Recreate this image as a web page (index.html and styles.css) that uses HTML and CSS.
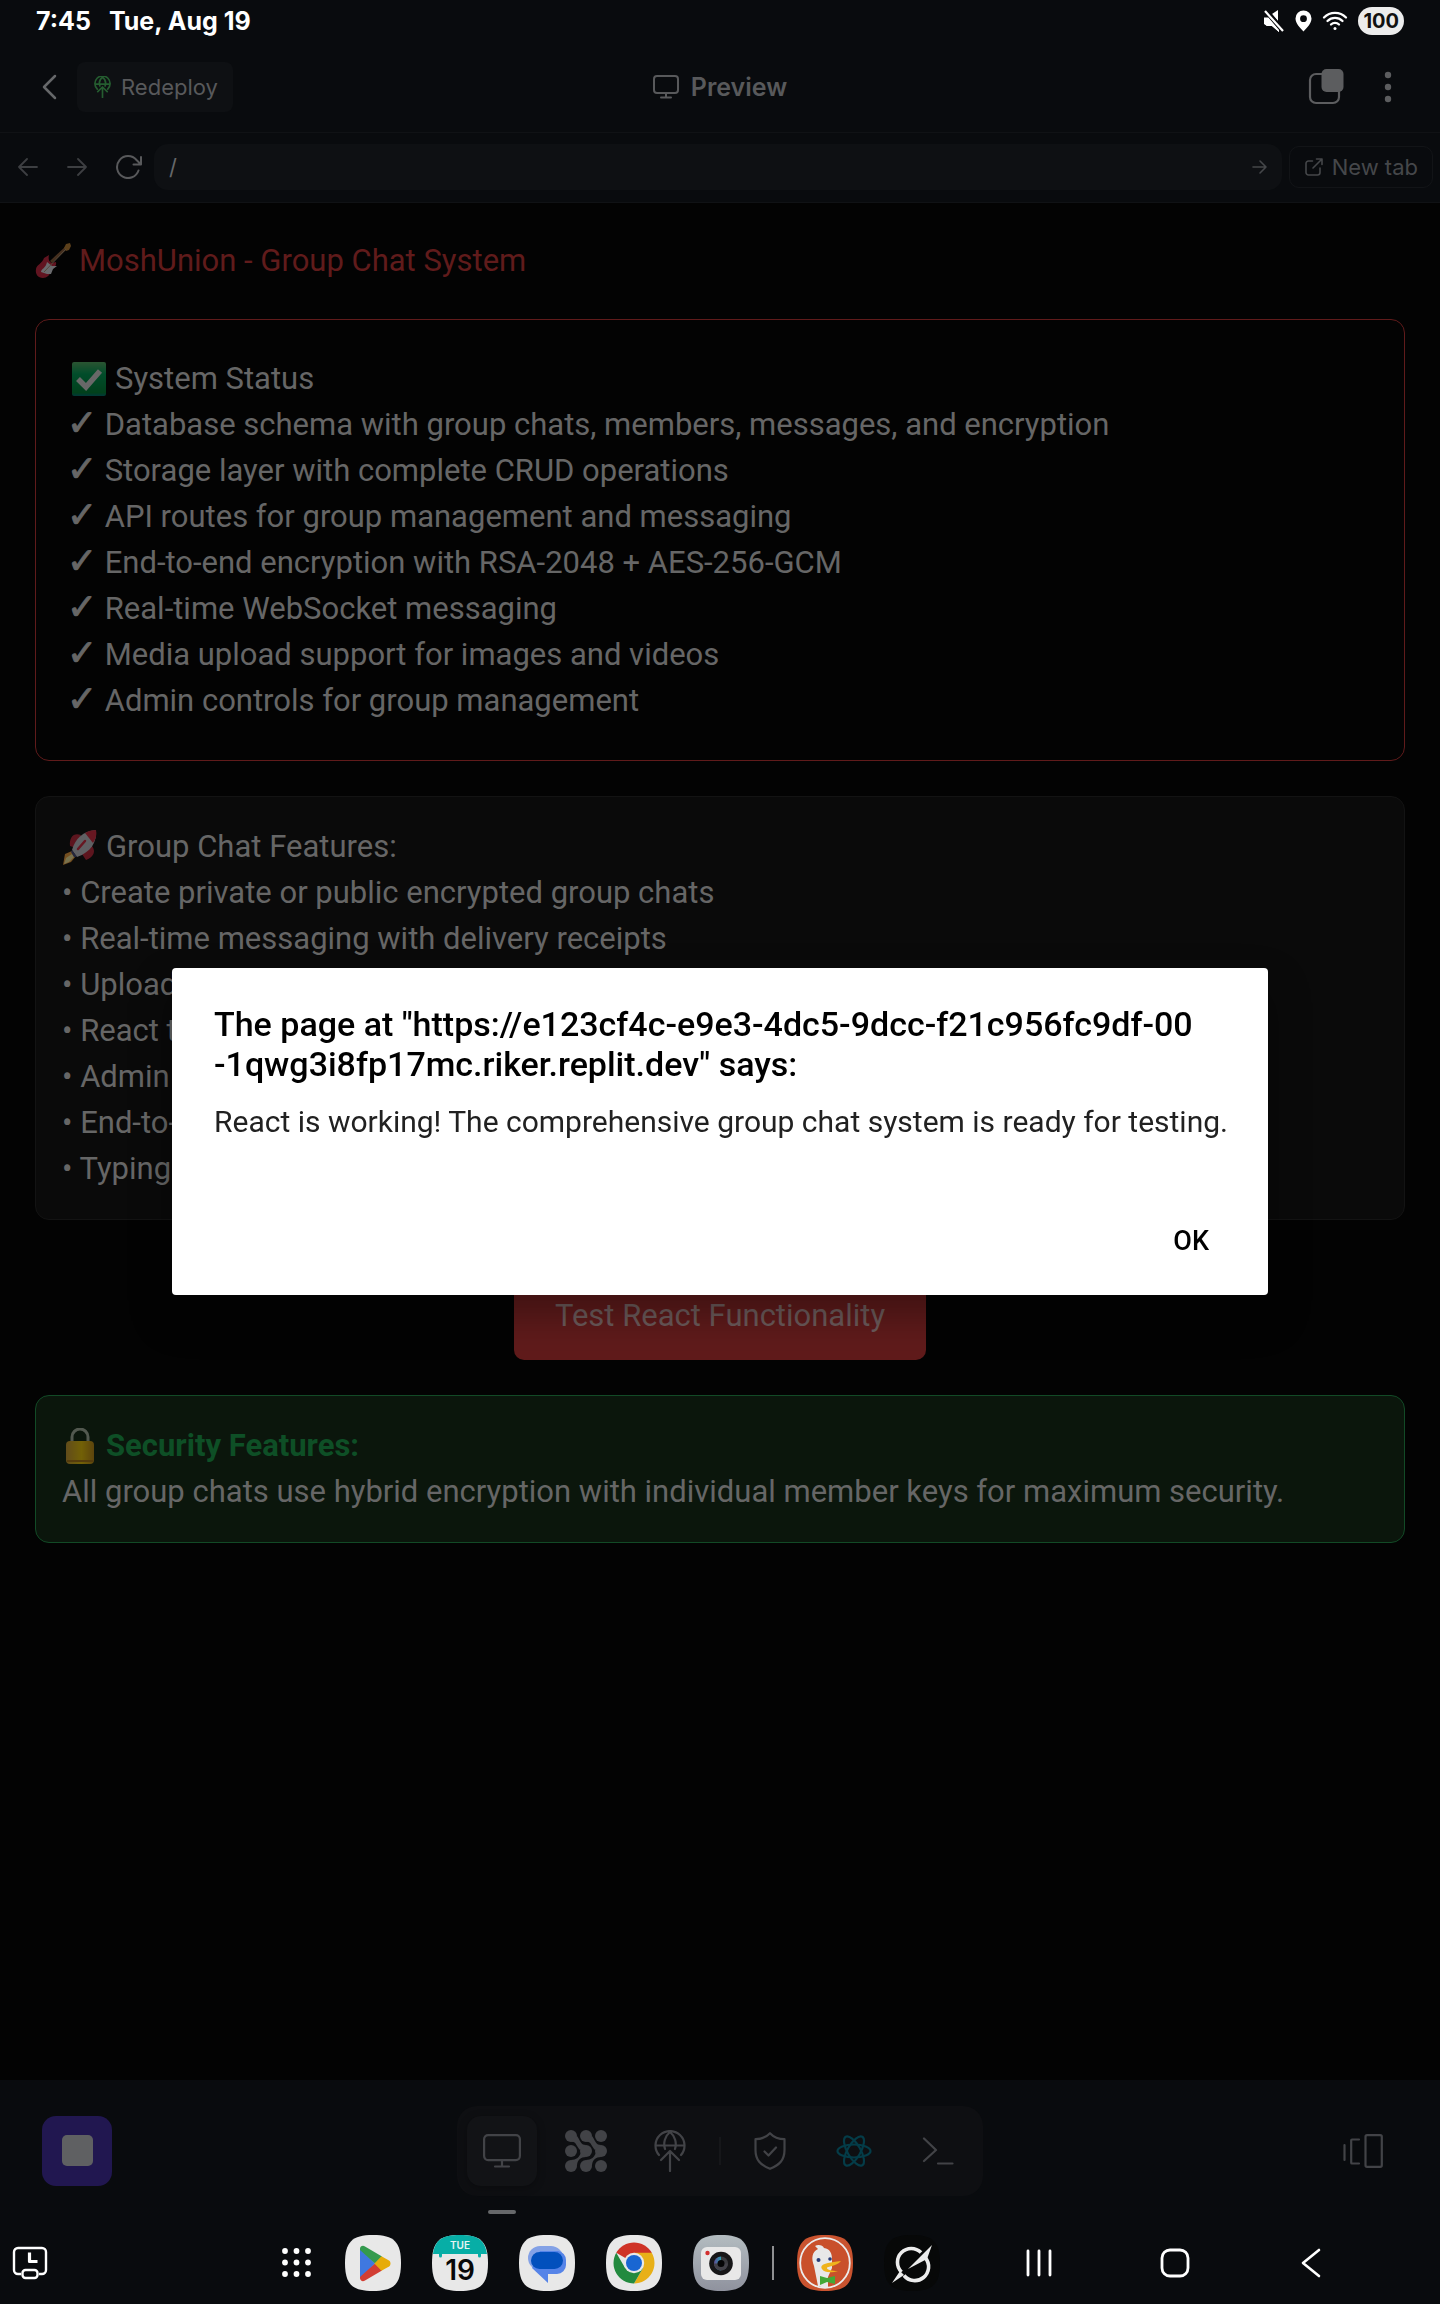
FILE: index.html
```html
<!DOCTYPE html>
<html lang="en">
<head>
<meta charset="utf-8">
<meta name="viewport" content="width=device-width, initial-scale=1">
<title>Preview</title>
<link rel="stylesheet" href="styles.css">
</head>
<body>
<div class="screen">
  <div class="status-bar">
    <span>7:45</span>
    <span>Tue, Aug 19</span>
    <div class="status-icons">
      <svg width="22" height="24" viewBox="0 0 22 24"><path d="M1 9h4l2-2 9 11v5l-7-6H4l-3-3zM9 5l6-4v11z" fill="#fff"/><path d="M3 2l17 20" stroke="#0a0b0e" stroke-width="5"/><path d="M1 8.500h4l11 13v1.500l-7-6H4l-3-2z" fill="#fff"/><path d="M2 2l18 20" stroke="#fff" stroke-width="2.200"/></svg>
      <svg width="17" height="22" viewBox="0 0 17 22"><path fill="#fff" fill-rule="evenodd" d="M8.500 .5a8 8 0 0 1 8 8c0 5-4.500 9-8 13-3.500-4-8-8-8-13a8 8 0 0 1 8-8zm0 4.800a3.400 3.400 0 1 0 0 6.800 3.400 3.400 0 0 0 0-6.800z"/></svg>
      <svg class="wifi" width="26" height="20" viewBox="0 0 26 20" fill="none" stroke="#fff" stroke-width="2.300" stroke-linecap="round"><path d="M2 6.500a15.500 15.500 0 0 1 22 0M5.500 10a10.500 10.500 0 0 1 15 0M9 13.500a5.700 5.700 0 0 1 8 0"/><circle cx="13" cy="17.500" r="1.500" fill="#fff" stroke="none"/></svg>
      <span class="battery">100</span>
    </div>
  </div>

  <header class="top-bar">
    <div class="top-left">
      <button class="icon-btn back" aria-label="Back"><svg width="16" height="26" viewBox="0 0 16 26" fill="none" stroke="#66686a" stroke-width="2.500" stroke-linecap="round" stroke-linejoin="round"><path d="M14 2L3 13l11 11"/></svg></button>
      <button class="redeploy">
        <svg width="17" height="22" viewBox="0 0 32 42" fill="none" stroke="#255d30" stroke-width="3.200" stroke-linecap="round" stroke-linejoin="round"><path d="M6 25a14.500 14.500 0 1 1 20 0M2 15.500h28M11 19c-2-6 0-13 5-17 5 4 7 11 5 17M16 41V21M7 30l9-9 9 9"/></svg>
        Redeploy
      </button>
    </div>
    <h1 class="top-title">
      <svg width="26" height="24" viewBox="0 0 26 24" fill="none" stroke="#58595b" stroke-width="2" stroke-linecap="round" stroke-linejoin="round"><rect x="1" y="1" width="24" height="17" rx="3"/><path d="M13 18v4M8 22.500h10"/></svg>
      Preview
    </h1>
    <div class="top-right">
      <button class="icon-btn" aria-label="Tabs"><svg width="36" height="36" viewBox="0 0 36 36"><rect x="2" y="5" width="29" height="29" rx="6" fill="none" stroke="#5c5d5f" stroke-width="2.200"/><rect x="13.500" y="0" width="22" height="23" rx="5" fill="#5c5d5f"/></svg></button>
      <button class="icon-btn" aria-label="More"><svg width="8" height="32" viewBox="0 0 8 32" fill="#5c5d5f"><circle cx="4" cy="4" r="3.200"/><circle cx="4" cy="16" r="3.200"/><circle cx="4" cy="28" r="3.200"/></svg></button>
    </div>
  </header>

  <nav class="url-row" aria-label="Address">
    <div class="url-nav">
      <button class="icon-btn" aria-label="Go back"><svg width="20" height="20" viewBox="0 0 20 20" fill="none" stroke="#3d3f42" stroke-width="1.800" stroke-linecap="round" stroke-linejoin="round"><path d="M19 10H1M9 2l-8 8 8 8"/></svg></button>
      <button class="icon-btn" aria-label="Go forward"><svg width="20" height="20" viewBox="0 0 20 20" fill="none" stroke="#3d3f42" stroke-width="1.800" stroke-linecap="round" stroke-linejoin="round"><path d="M1 10h18M11 2l8 8-8 8"/></svg></button>
      <button class="icon-btn" aria-label="Reload"><svg width="26" height="24" viewBox="0 0 26 24" fill="none" stroke="#58595b" stroke-width="2" stroke-linecap="round" stroke-linejoin="round"><path d="M22.500 15.500a11 11 0 1 1-2-10.500l4 4M25 2v7.500h-7.500"/></svg></button>
    </div>
    <div class="url-field">
      <input type="text" value="/" aria-label="Path">
      <svg width="16" height="16" viewBox="0 0 16 16" fill="none" stroke="#45474a" stroke-width="1.600" stroke-linecap="round" stroke-linejoin="round"><path d="M1 8h13M8 2l6 6-6 6"/></svg>
    </div>
    <button class="new-tab">
      <svg width="18" height="18" viewBox="0 0 18 18" fill="none" stroke="#45474a" stroke-width="1.600" stroke-linecap="round" stroke-linejoin="round"><path d="M7.500 3H3.500A2.500 2.500 0 0 0 1 5.500v9A2.500 2.500 0 0 0 3.500 17h9a2.500 2.500 0 0 0 2.500-2.500V10M11.500 1H17v5.500M17 1L8 10"/></svg>
      New tab
    </button>
  </nav>

  <main class="page">
    <h2 class="page-title">
      <svg class="emoji" viewBox="0 0 36 36"><path d="M16 19L31 5" stroke="#96653f" stroke-width="3"/><path d="M29 5l2-4 4-1 1 3-2 4-3 1z" fill="#c98a3a"/><path d="M9 15l5-3c-1 4 0 7 3 8l4-1c1 4-3 6-5 9-1 4-4 7-8 7-5 0-8-4-7-9 1-5 6-5 8-11z" fill="#d42a44"/><path d="M12 19l5 4 5 0-4 3-2 5-4 0-6-2c0-3 5-4 6-10z" fill="#e8e8ee"/><path d="M9 29L31 6" stroke="#b9a184" stroke-width="1"/></svg>
      MoshUnion - Group Chat System
    </h2>

    <section class="card status-card">
      <h3 class="line"><svg class="emoji check" viewBox="0 0 36 36"><defs><linearGradient id="ck" x2="0" y2="1"><stop stop-color="#5cb86c"/><stop offset=".35" stop-color="#00a75c"/><stop offset=".9" stop-color="#008a3a"/><stop offset="1" stop-color="#007a7a"/></linearGradient></defs><rect x="1" y="1" width="34" height="34" rx="2" fill="url(#ck)"/><path d="M7 18l8 8L29 10" fill="none" stroke="#e4e4e4" stroke-width="5.500"/></svg> System Status</h3>
      <ul class="lines">
        <li><span class="tick">✓</span> Database schema with group chats, members, messages, and encryption</li>
        <li><span class="tick">✓</span> Storage layer with complete CRUD operations</li>
        <li><span class="tick">✓</span> API routes for group management and messaging</li>
        <li><span class="tick">✓</span> End-to-end encryption with RSA-2048 + AES-256-GCM</li>
        <li><span class="tick">✓</span> Real-time WebSocket messaging</li>
        <li><span class="tick">✓</span> Media upload support for images and videos</li>
        <li><span class="tick">✓</span> Admin controls for group management</li>
      </ul>
    </section>

    <section class="card features-card">
      <h3 class="line"><svg class="emoji" viewBox="0 0 36 36"><path d="M3 25l7-3 4 5-5 6-8 3z" fill="#f6a13a"/><path d="M4 29l6-4 2 3-5 5-5 2z" fill="#fff0a0"/><path d="M19 6C12 3 7 8 8 17l6 2zM30 17c4 5 2 11-6 14l-4-6z" fill="#c22438"/><path d="M10 21C13 10 21 2 34 1c1 12-5 22-19 27z" fill="#c8c8d0"/><path d="M23 4c3-2 7-3 11-3 1 4 0 9-3 13z" fill="#d8283e"/><path d="M16 20L23 12" stroke="#d8283e" stroke-width="2.500" stroke-linecap="round"/><path d="M10 21l5 7-3 0-3-5z" fill="#444a7c"/></svg> Group Chat Features:</h3>
      <ul class="lines">
        <li>• Create private or public encrypted group chats</li>
        <li>• Real-time messaging with delivery receipts</li>
        <li>• Upload</li>
        <li>• React t</li>
        <li>• Admin</li>
        <li>• End-to-</li>
        <li>• Typing</li>
      </ul>
    </section>

    <button class="test-btn">Test React Functionality</button>

    <section class="card security-card">
      <h3 class="line"><svg class="emoji" viewBox="0 0 36 36"><defs><linearGradient id="lk"><stop stop-color="#c98d2e"/><stop offset=".55" stop-color="#f0bc00"/><stop offset="1" stop-color="#c07d10"/></linearGradient></defs><path d="M10 14V9a8 8 0 0 1 16 0v5" fill="none" stroke="#a8a8a0" stroke-width="3"/><rect x="4" y="13" width="28" height="23" rx="4" fill="url(#lk)"/><path d="M5 33h26" stroke="#b06a10" stroke-width="2"/></svg> Security Features:</h3>
      <p class="line">All group chats use hybrid encryption with individual member keys for maximum security.</p>
    </section>
  </main>

  <div class="tool-bar">
    <button class="stop-btn" aria-label="Stop"><span></span></button>
    <div class="tools">
      <button class="tool active" aria-label="Preview"><svg width="38" height="34" viewBox="0 0 38 34" fill="none" stroke="#424347" stroke-width="2.200" stroke-linecap="round" stroke-linejoin="round"><rect x="1.100" y="1.100" width="35.800" height="25" rx="4"/><path d="M19 26v6M12 32.500h14"/></svg></button>
      <button class="tool" aria-label="Agent"><svg width="42" height="42" viewBox="0 0 42 42" fill="#424347"><circle cx="6" cy="6" r="6"/><circle cx="21" cy="6" r="6"/><circle cx="36" cy="6" r="6"/><circle cx="6" cy="21" r="6"/><circle cx="21" cy="21" r="6"/><circle cx="36" cy="21" r="6"/><circle cx="6" cy="36" r="6"/><circle cx="21" cy="36" r="6"/><circle cx="36" cy="36" r="6"/><path d="M6 12c5-1 5 4 9 8l6-5c-5 0-5-3-9-9zM21 12c5-1 5 4 9 8l6-5c-5 0-5-3-9-9zM12 36c0-6 4-9 9-9l-5-5c-1 5-5 8-10 8zM27 36c0-6 4-9 9-9l-5-5c-1 5-5 8-10 8z"/></svg></button>
      <button class="tool" aria-label="Deploy"><svg width="32" height="42" viewBox="0 0 32 42" fill="none" stroke="#424347" stroke-width="2.200" stroke-linecap="round" stroke-linejoin="round"><path d="M5 25a14.500 14.500 0 1 1 22 0M2 15.500h28M11 19c-2-6 0-13 5-17 5 4 7 11 5 17M16 41V21M7 30l9-9 9 9"/></svg></button>
      <span class="tool-divider"></span>
      <button class="tool" aria-label="Security"><svg width="32" height="38" viewBox="0 0 32 38" fill="none" stroke="#424347" stroke-width="2.200" stroke-linecap="round" stroke-linejoin="round"><path d="M16 1.200c4 4.300 8 6 14.500 6V18c0 10-5 15-14.500 18.800C6.500 33 1.500 28 1.500 18V7.200c6.500 0 10.500-1.700 14.500-6zM10.500 19.500l4 4 7.500-8"/></svg></button>
      <button class="tool" aria-label="React"><svg width="36" height="34" viewBox="0 0 36 34" fill="none" stroke="#043c48" stroke-width="2.200"><ellipse cx="18" cy="17" rx="16.500" ry="6.500"/><ellipse cx="18" cy="17" rx="16.500" ry="6.500" transform="rotate(60 18 17)"/><ellipse cx="18" cy="17" rx="16.500" ry="6.500" transform="rotate(120 18 17)"/></svg></button>
      <button class="tool" aria-label="Shell"><svg width="32" height="28" viewBox="0 0 32 28" fill="none" stroke="#424347" stroke-width="2.200" stroke-linecap="round" stroke-linejoin="round"><path d="M2 1.500l12 11.500L2 24M16 26.500h14.500"/></svg></button>
    </div>
    <button class="icon-btn panes" aria-label="Panes"><svg width="40" height="34" viewBox="0 0 40 34" fill="none" stroke="#424347" stroke-width="2.200" stroke-linecap="round" stroke-linejoin="round"><rect x="22.500" y="1.200" width="16.300" height="31.600" rx="1.500"/><path d="M16 5.500H9a.8.8 0 0 0-.8.8v22.400a.8.8 0 0 0 .8.8h7M1.500 11v15"/></svg></button>
    <span class="tool-marker"></span>
  </div>

  <footer class="dock">
    <svg class="dock-clock" width="36" height="34" viewBox="0 0 36 34" fill="none" stroke="#fff" stroke-width="2.400" stroke-linejoin="round"><path d="M9 28H6a4 4 0 0 1-4-4V6a4 4 0 0 1 4-4h24a4 4 0 0 1 4 4v18a4 4 0 0 1-4 4h-3"/><rect x="10.500" y="24" width="15" height="8" rx="3"/><path d="M17.500 6.500v9h8" stroke-width="3.200"/></svg>
    <div class="apps">
      <button class="app-grid" aria-label="All apps"><svg width="30" height="30" viewBox="0 0 30 30" fill="#fff"><circle cx="3" cy="3" r="2.900"/><circle cx="14.500" cy="3" r="2.900"/><circle cx="26" cy="3" r="2.900"/><circle cx="3" cy="14.500" r="2.900"/><circle cx="14.500" cy="14.500" r="2.900"/><circle cx="26" cy="14.500" r="2.900"/><circle cx="3" cy="26" r="2.900"/><circle cx="14.500" cy="26" r="2.900"/><circle cx="26" cy="26" r="2.900"/></svg></button>
      <button class="app" aria-label="Play Store"><svg width="56" height="56" viewBox="0 0 56 56"><path d="M28 0C49 0 56 7 56 28S49 56 28 56 0 49 0 28 7 0 28 0z" fill="#e8e8e8"/><path d="M15 13v31l15-15.500z" fill="#3f78e0"/><path d="M15 14c0-3 3-4 5-2.500l17 10-7 7L15 15z" fill="#349a4e"/><path d="M15 43c0 3 3 4 5 2.500l17-10-7-7L15 42z" fill="#d23e34"/><path d="M36.500 21.200l7.500 4.300c2 1.300 2 4.700 0 6l-7.500 4.300-7-7.300z" fill="#e6ac08"/></svg></button>
      <button class="app calendar" aria-label="Calendar"><svg width="56" height="56" viewBox="0 0 56 56"><path d="M28 0C49 0 56 7 56 28S49 56 28 56 0 49 0 28 7 0 28 0z" fill="#e8e8e8"/><path d="M1 19C3 5 10 0 28 0s25 5 27 19h-6v2a1.500 1.500 0 0 1-3 0v-2H10v2a1.500 1.500 0 0 1-3 0v-2z" fill="#07aea6"/></svg><span class="cal-day">TUE</span><span class="cal-date">19</span></button>
      <button class="app" aria-label="Messages"><svg width="56" height="56" viewBox="0 0 56 56"><path d="M28 0C49 0 56 7 56 28S49 56 28 56 0 49 0 28 7 0 28 0z" fill="#e8e8e8"/><rect x="9" y="11" width="35" height="24" rx="12" fill="#83a1e6"/><path d="M21 16h18a9 9 0 0 1 8 9v5a9 9 0 0 1-9 9h-9v9L13 33z" fill="#5684e8"/><rect x="12" y="17" width="32" height="17" rx="8.500" fill="#0250bd"/></svg></button>
      <button class="app" aria-label="Chrome"><svg width="56" height="56" viewBox="0 0 56 56"><path d="M28 0C49 0 56 7 56 28S49 56 28 56 0 49 0 28 7 0 28 0z" fill="#e8e8e8"/><path d="M28 28L10.250 17.750A20.500 20.500 0 0 1 45.750 17.750z" fill="#cf3327"/><path d="M28 17.750h17.750A20.500 20.500 0 0 1 28 48.500l9-15.400z" fill="#e8b018"/><path d="M10.250 17.750A20.500 20.500 0 0 0 28 48.500l9-15.400L28 36l-8.900-3z" fill="#238a3f"/><circle cx="28" cy="28" r="10.200" fill="#e8e8e8"/><circle cx="28" cy="28" r="8" fill="#1966d2"/></svg></button>
      <button class="app" aria-label="Camera"><svg width="56" height="56" viewBox="0 0 56 56"><defs><linearGradient id="cm" x2="0" y2="1"><stop stop-color="#b3bcc0"/><stop offset="1" stop-color="#8f929e"/></linearGradient><linearGradient id="ln"><stop stop-color="#5f4b94"/><stop offset=".5" stop-color="#2ba0b4"/><stop offset=".5" stop-color="#3a3a3e"/></linearGradient></defs><path d="M28 0C49 0 56 7 56 28S49 56 28 56 0 49 0 28 7 0 28 0z" fill="url(#cm)"/><rect x="8" y="12" width="40" height="33" rx="6" fill="#e8e8e8"/><circle cx="14.500" cy="18" r="2.200" fill="#d23030"/><circle cx="28" cy="28.500" r="11.800" fill="#161618"/><circle cx="28" cy="28.500" r="7" fill="url(#ln)"/><path d="M21 28.500a7 7 0 0 0 14 0z" fill="#424148"/><circle cx="28" cy="28.500" r="3.500" fill="#050506"/></svg></button>
      <span class="dock-divider"></span>
      <button class="app" aria-label="DuckDuckGo"><svg width="56" height="56" viewBox="0 0 56 56"><path d="M28 0C49 0 56 7 56 28S49 56 28 56 0 49 0 28 7 0 28 0z" fill="#c9532f"/><circle cx="28" cy="28" r="24.800" fill="#c9502b" stroke="#ececec" stroke-width="1.800"/><path d="M18 11c3-2 8-1 9 2 6 1 8 5 8 11v9l-4 9v10c-4 1-7 0-10-1l-4-20c-3-8-2-14 4-17z" fill="#e8e8e8"/><circle cx="21.500" cy="25" r="2" fill="#283c78"/><circle cx="33" cy="24" r="1.800" fill="#283c78"/><path d="M44 26c-6 1-9 1-13 2-5 1-8 3-6 6 2 4 10 4 16 2-6 0-11-1-11-3s9-1 14-7z" fill="#efb31c"/><path d="M23 41l7 2 8-2v8l-8-2-7 3z" fill="#43a836"/></svg></button>
      <button class="app" aria-label="Grok"><svg width="56" height="56" viewBox="0 0 56 56"><path d="M28 0C49 0 56 7 56 28S49 56 28 56 0 49 0 28 7 0 28 0z" fill="#070808"/><path d="M37 17.500A13.700 13.700 0 0 0 17.500 37M20 40.500A13.700 13.700 0 0 0 41.500 23" fill="none" stroke="#ececec" stroke-width="3.600"/><path d="M48 10L24 34 43 24zM8 48l8-12 4 4z" fill="#ececec"/></svg></button>
    </div>
    <div class="sys-nav">
      <button aria-label="Recents"><svg width="28" height="28" viewBox="0 0 28 28" stroke="#fff" stroke-width="2.800" stroke-linecap="round"><path d="M3 2v24M14 2v24M25 2v24"/></svg></button>
      <button aria-label="Home"><svg width="30" height="30" viewBox="0 0 30 30" fill="none" stroke="#fff" stroke-width="2.800"><rect x="2" y="2" width="26" height="26" rx="8"/></svg></button>
      <button aria-label="System back"><svg width="20" height="30" viewBox="0 0 20 30" fill="none" stroke="#fff" stroke-width="2.600" stroke-linecap="round" stroke-linejoin="round"><path d="M18 2L2 15l16 13"/></svg></button>
    </div>
  </footer>
</div>

<div class="overlay">
  <dialog class="alert" open aria-labelledby="alert-title">
    <h2 id="alert-title">The page at "https://e123cf4c-e9e3-4dc5-9dcc-f21c956fc9df-00<br>-1qwg3i8fp17mc.riker.replit.dev" says:</h2>
    <p>React is working! The comprehensive group chat system is ready for testing.</p>
    <button>OK</button>
  </dialog>
</div>
</body>
</html>
```
FILE: styles.css
```css
*,
*::before,
*::after {
  box-sizing: border-box;
}

body,
h1,
h2,
h3,
p,
ul {
  margin: 0;
  padding: 0;
}

body {
  background: #090b0e;
  font-family: Roboto, "Liberation Sans", sans-serif;
}

button {
  display: flex;
  align-items: center;
  justify-content: center;
  margin: 0;
  padding: 0;
  border: 0;
  background: none;
  font: inherit;
  color: inherit;
}

svg {
  display: block;
  flex: none;
}

.screen {
  display: flex;
  flex-direction: column;
  min-height: 100vh;
}

/* Android status bar */
.status-bar {
  display: flex;
  align-items: center;
  gap: 18px;
  height: 42px;
  padding: 0 36px;
  color: #fff;
  font: 700 25px/32px Inter, sans-serif;
}

.status-icons {
  display: flex;
  align-items: center;
  gap: 10px;
  margin-left: auto;
}

.battery {
  padding: 0 5px;
  border-radius: 14px;
  background: #ececec;
  color: #111;
  font-size: 20px;
  line-height: 28px;
}

/* App header */
.top-bar {
  display: grid;
  grid-template-columns: 1fr auto 1fr;
  align-items: center;
  height: 91px;
  padding: 0 36px;
  border-bottom: 1px solid #101215;
  color: #58595b;
  font: 400 22px/32px Inter, sans-serif;
}

.top-left,
.top-right {
  display: flex;
  align-items: center;
}

.top-left {
  gap: 15px;
}

.back {
  width: 26px;
}

.top-right {
  justify-content: flex-end;
  gap: 40px;
  padding-right: 12px;
}

.redeploy {
  gap: 10px;
  height: 50px;
  padding: 0 15px 0 17px;
  border-radius: 8px;
  background: #0e1013;
}

.top-title {
  display: flex;
  align-items: center;
  gap: 12px;
  font-size: 25px;
  font-weight: 600;
}

/* Address row */
.url-row {
  display: flex;
  align-items: center;
  gap: 7px;
  height: 70px;
  padding: 0 7px 2px 18px;
  border-bottom: 1px solid #101215;
  color: #45474a;
  font: 400 22px/32px Inter, sans-serif;
}

.url-nav {
  display: flex;
  align-items: center;
  gap: 29px;
  width: 129px;
}

.url-field {
  display: flex;
  flex: 1;
  align-items: center;
  height: 46px;
  padding: 0 14px 0 15px;
  border-radius: 14px;
  background: #0e1013;
}

.url-field input {
  flex: 1;
  min-width: 0;
  padding: 0;
  border: 0;
  outline: 0;
  background: none;
  color: #66686a;
  font: inherit;
}

.new-tab {
  gap: 9px;
  height: 42px;
  padding: 0 14px 0 15px;
  border: 1px solid #121417;
  border-radius: 10px;
}

/* Previewed page */
.page {
  display: flex;
  flex: 1;
  flex-direction: column;
  padding: 35px;
  background: #030303;
  color: #666;
  font-size: 31px;
  line-height: 46px;
}

.page-title,
.line {
  font-size: 31px;
  font-weight: 400;
}

.page-title {
  color: #601b1b;
}

.page-title,
h3.line {
  display: flex;
  align-items: center;
  gap: 8px;
}

.emoji {
  width: 36px;
  height: 36px;
  opacity: 0.45;
}

.lines {
  list-style: none;
}

.tick {
  display: inline-block;
  width: 26px;
  font-family: "DejaVu Sans", sans-serif;
  font-size: 36px;
  line-height: 40px;
  text-indent: -4px;
  -webkit-text-stroke: 1px;
}

.card {
  margin-top: 35px;
  border: 1px solid;
  border-radius: 14px;
}

.status-card {
  padding: 36px 35px;
  border-color: #601b1b;
}

.features-card {
  padding: 27px 26px;
  border-color: #131313;
  background: #0a0a0a;
}

.test-btn {
  align-self: center;
  margin-top: 52px;
  padding: 21px 41px;
  border-radius: 10px;
  background: #601b1b;
  color: #6e5c5c;
}

.security-card {
  padding: 27px 26px;
  border-color: #124a26;
  background: #0b160c;
}

.security-card h3 {
  color: #0e4f26;
  font-weight: 700;
}

/* Workspace tools */
.tool-bar {
  position: relative;
  display: grid;
  grid-template-columns: 1fr auto 1fr;
  align-items: center;
  height: 141px;
  padding: 0 42px;
}

.stop-btn {
  width: 70px;
  height: 70px;
  border-radius: 14px;
  background: #211750;
}

.stop-btn span {
  width: 31px;
  height: 31px;
  border-radius: 5px;
  background: #5f6062;
}

.tools {
  display: flex;
  align-items: center;
  gap: 14px;
  padding: 10px;
  border-radius: 20px;
  background: #0e0f12;
}

.tool {
  width: 70px;
  height: 70px;
  border-radius: 14px;
}

.tool.active {
  background: #121316;
  box-shadow: 0 2px 8px rgb(0 0 0 / 30%);
}

.tool-divider {
  width: 2px;
  height: 28px;
  background: #16171a;
}

.panes {
  justify-self: end;
  padding-right: 15px;
}

.tool-marker {
  position: absolute;
  bottom: 7px;
  left: calc(50% - 232px);
  width: 28px;
  height: 4px;
  border-radius: 2px;
  background: #66686a;
}

/* Taskbar */
.dock {
  display: flex;
  align-items: center;
  height: 83px;
  padding: 0 101px 0 12px;
}

.apps {
  display: flex;
  align-items: center;
  gap: 31px;
  margin-left: auto;
}

.app-grid {
  justify-content: flex-start;
  width: 32px;
}

.calendar {
  position: relative;
  font-family: Inter, sans-serif;
}

.cal-day,
.cal-date {
  position: absolute;
  right: 0;
  left: 0;
  text-align: center;
}

.cal-day {
  top: 3px;
  color: #e8f4f4;
  font-size: 10px;
  font-weight: 600;
  line-height: 14px;
}

.cal-date {
  bottom: 5px;
  color: #080808;
  font-size: 28px;
  font-weight: 600;
  line-height: 32px;
}

.dock-divider {
  width: 2px;
  height: 34px;
  margin: 0 -8px;
  background: #8f9092;
}

.sys-nav {
  display: flex;
  gap: 80px;
  margin-left: 71px;
}

.sys-nav button {
  width: 56px;
  height: 56px;
}

/* JavaScript alert */
.overlay {
  position: fixed;
  inset: 0;
  display: flex;
  align-items: center;
  justify-content: center;
  padding: 0 24px 42px;
}

.alert {
  position: static;
  width: 1096px;
  max-width: 100%;
  margin: 0;
  padding: 36px 30px 28px 42px;
  border: 0;
  border-radius: 4px;
  background: #fff;
  color: #000;
  box-shadow: 0 20px 40px rgb(0 0 0 / 35%);
}

.alert h2 {
  font-size: 34px;
  font-weight: 500;
  line-height: 40px;
}

.alert p {
  margin-top: 18px;
  color: #212121;
  font-size: 30px;
  line-height: 40px;
}

.alert button {
  height: 52px;
  margin: 73px 13px 0 auto;
  padding: 0 16px;
  font-size: 27px;
  font-weight: 500;
}
```
